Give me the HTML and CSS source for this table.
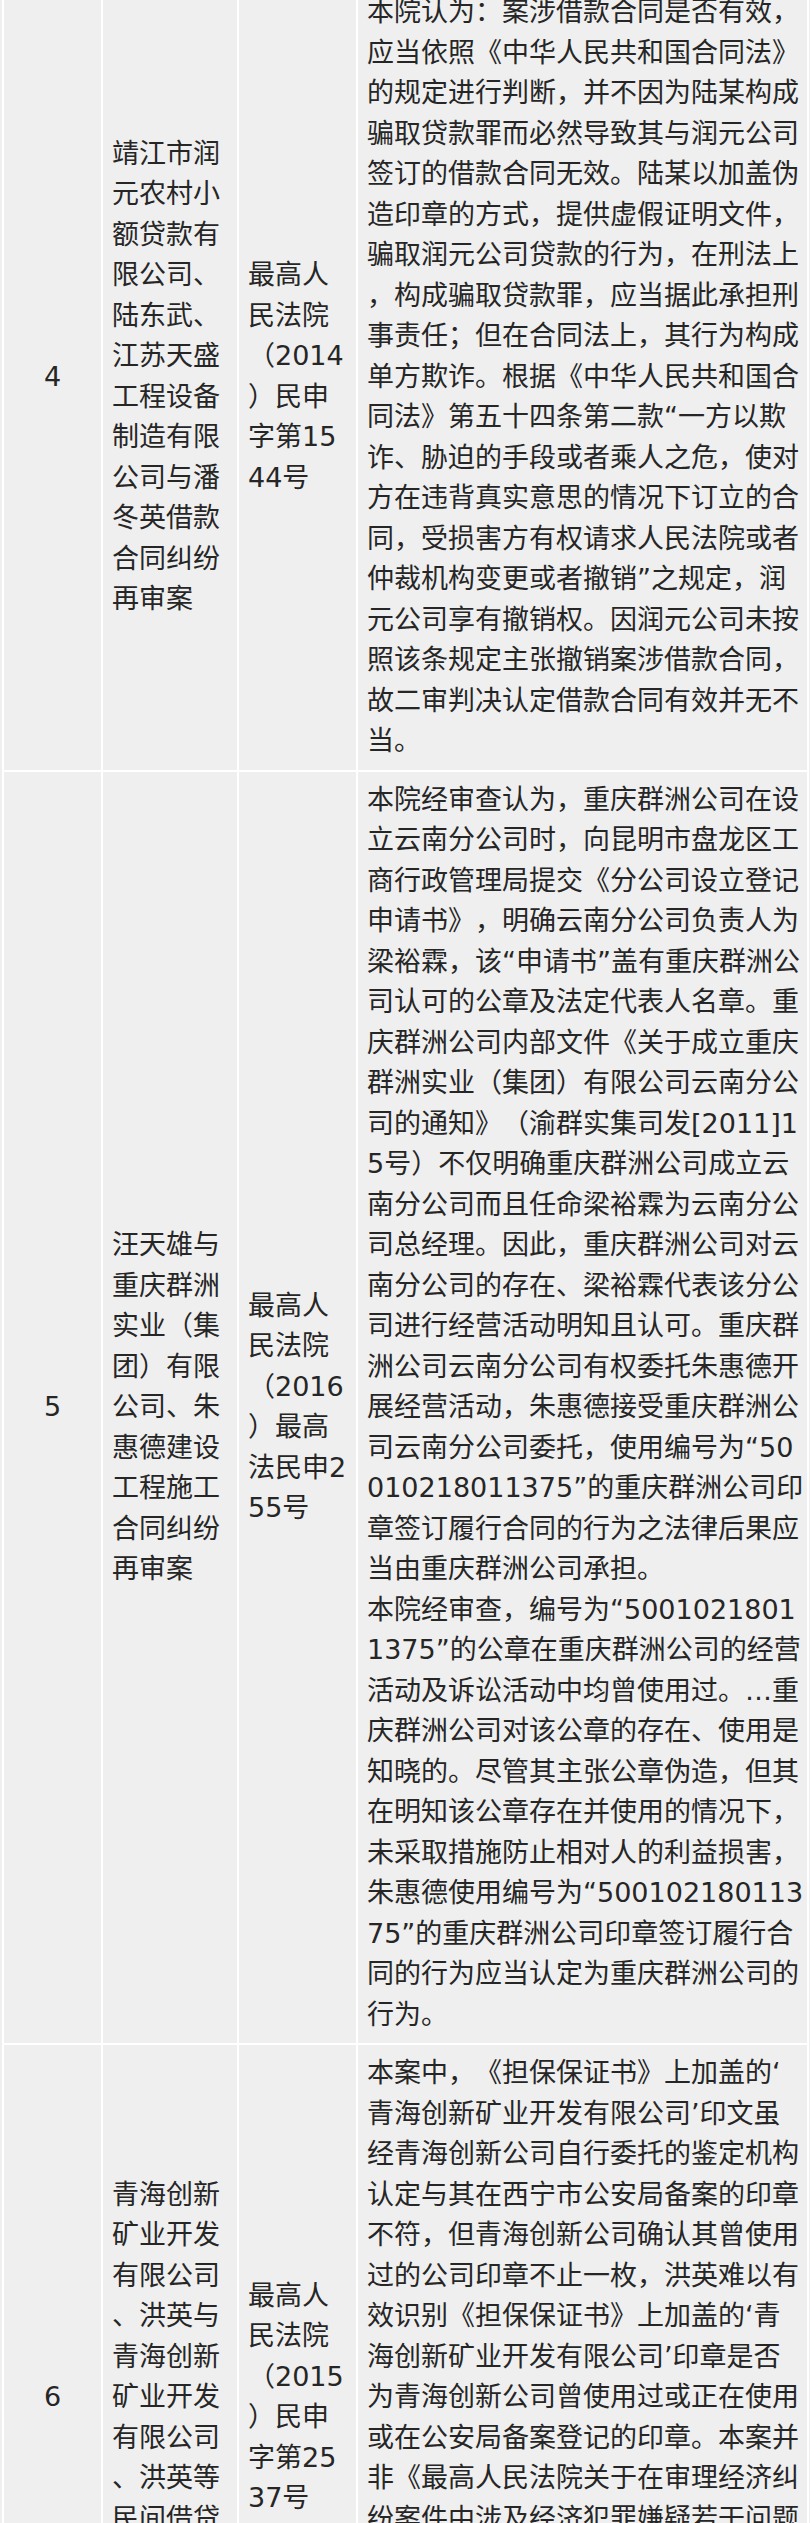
FILE: index.html
```html
<!DOCTYPE html>
<html lang="zh-CN">
<head>
<meta charset="utf-8">
<title>案例表</title>
<link rel="stylesheet" href="styles.css">
</head>
<body>
<div class="case-table">
  <div class="cell num">4</div>
  <div class="cell name">靖江市润<br>元农村小<br>额贷款有<br>限公司、<br>陆东武、<br>江苏天盛<br>工程设备<br>制造有限<br>公司与潘<br>冬英借款<br>合同纠纷<br>再审案</div>
  <div class="cell code">最高人<br>民法院<br>（2014<br>）民申<br>字第15<br>44号</div>
  <div class="cell view">本院认为：案涉借款合同是否有效，<br>应当依照《中华人民共和国合同法》<br>的规定进行判断，并不因为陆某构成<br>骗取贷款罪而必然导致其与润元公司<br>签订的借款合同无效。陆某以加盖伪<br>造印章的方式，提供虚假证明文件，<br>骗取润元公司贷款的行为，在刑法上<br>，构成骗取贷款罪，应当据此承担刑<br>事责任；但在合同法上，其行为构成<br>单方欺诈。根据《中华人民共和国合<br>同法》第五十四条第二款“一方以欺<br>诈、胁迫的手段或者乘人之危，使对<br>方在违背真实意思的情况下订立的合<br>同，受损害方有权请求人民法院或者<br>仲裁机构变更或者撤销”之规定，润<br>元公司享有撤销权。因润元公司未按<br>照该条规定主张撤销案涉借款合同，<br>故二审判决认定借款合同有效并无不<br>当。</div>

  <div class="cell num">5</div>
  <div class="cell name">汪天雄与<br>重庆群洲<br>实业（集<br>团）有限<br>公司、朱<br>惠德建设<br>工程施工<br>合同纠纷<br>再审案</div>
  <div class="cell code">最高人<br>民法院<br>（2016<br>）最高<br>法民申2<br>55号</div>
  <div class="cell view">本院经审查认为，重庆群洲公司在设<br>立云南分公司时，向昆明市盘龙区工<br>商行政管理局提交《分公司设立登记<br>申请书》，明确云南分公司负责人为<br>梁裕霖，该“申请书”盖有重庆群洲公<br>司认可的公章及法定代表人名章。重<br>庆群洲公司内部文件《关于成立重庆<br>群洲实业（集团）有限公司云南分公<br>司的通知》（渝群实集司发[2011]1<br>5号）不仅明确重庆群洲公司成立云<br>南分公司而且任命梁裕霖为云南分公<br>司总经理。因此，重庆群洲公司对云<br>南分公司的存在、梁裕霖代表该分公<br>司进行经营活动明知且认可。重庆群<br>洲公司云南分公司有权委托朱惠德开<br>展经营活动，朱惠德接受重庆群洲公<br>司云南分公司委托，使用编号为“50<br>010218011375”的重庆群洲公司印<br>章签订履行合同的行为之法律后果应<br>当由重庆群洲公司承担。<br>本院经审查，编号为“5001021801<br>1375”的公章在重庆群洲公司的经营<br>活动及诉讼活动中均曾使用过。…重<br>庆群洲公司对该公章的存在、使用是<br>知晓的。尽管其主张公章伪造，但其<br>在明知该公章存在并使用的情况下，<br>未采取措施防止相对人的利益损害，<br>朱惠德使用编号为“500102180113<br>75”的重庆群洲公司印章签订履行合<br>同的行为应当认定为重庆群洲公司的<br>行为。</div>

  <div class="cell num">6</div>
  <div class="cell name">青海创新<br>矿业开发<br>有限公司<br>、洪英与<br>青海创新<br>矿业开发<br>有限公司<br>、洪英等<br>民间借贷<br>纠纷再审<br>案</div>
  <div class="cell code">最高人<br>民法院<br>（2015<br>）民申<br>字第25<br>37号</div>
  <div class="cell view">本案中，《担保保证书》上加盖的‘<br>青海创新矿业开发有限公司’印文虽<br>经青海创新公司自行委托的鉴定机构<br>认定与其在西宁市公安局备案的印章<br>不符，但青海创新公司确认其曾使用<br>过的公司印章不止一枚，洪英难以有<br>效识别《担保保证书》上加盖的‘青<br>海创新矿业开发有限公司’印章是否<br>为青海创新公司曾使用过或正在使用<br>或在公安局备案登记的印章。本案并<br>非《最高人民法院关于在审理经济纠<br>纷案件中涉及经济犯罪嫌疑若干问题<br>的规定》第五条规定的情形，不能以<br>印章系伪造为由免除青海创新公司的<br>责任。因此，二审判决认定青海创新<br>公司应当承担连带保证责任，并无不<br>当。</div>
</div>
</body>
</html>
```
FILE: styles.css
```css
html, body {
  margin: 0;
  padding: 0;
  background: #efefef;
}

body {
  font-family: "DejaVu Sans", "Noto Sans CJK SC", sans-serif;
  font-size: 27px;
  line-height: 40.5px;
  color: #262626;
  text-spacing-trim: space-all;
}

.case-table {
  display: grid;
  grid-template-columns: 97px 134px 117px 449px;
  gap: 2px;
  padding: 2px;
  width: max-content;
  margin: -18px 0 0 2px;
  background: #ffffff;
}

.cell {
  background: #efefef;
  white-space: nowrap;
  display: flex;
  flex-direction: column;
  justify-content: center;
  padding: 8px 0 8px 9px;
}

.cell.num {
  align-items: center;
  padding: 8px 0;
}

.cell.view {
  justify-content: flex-start;
}
```
